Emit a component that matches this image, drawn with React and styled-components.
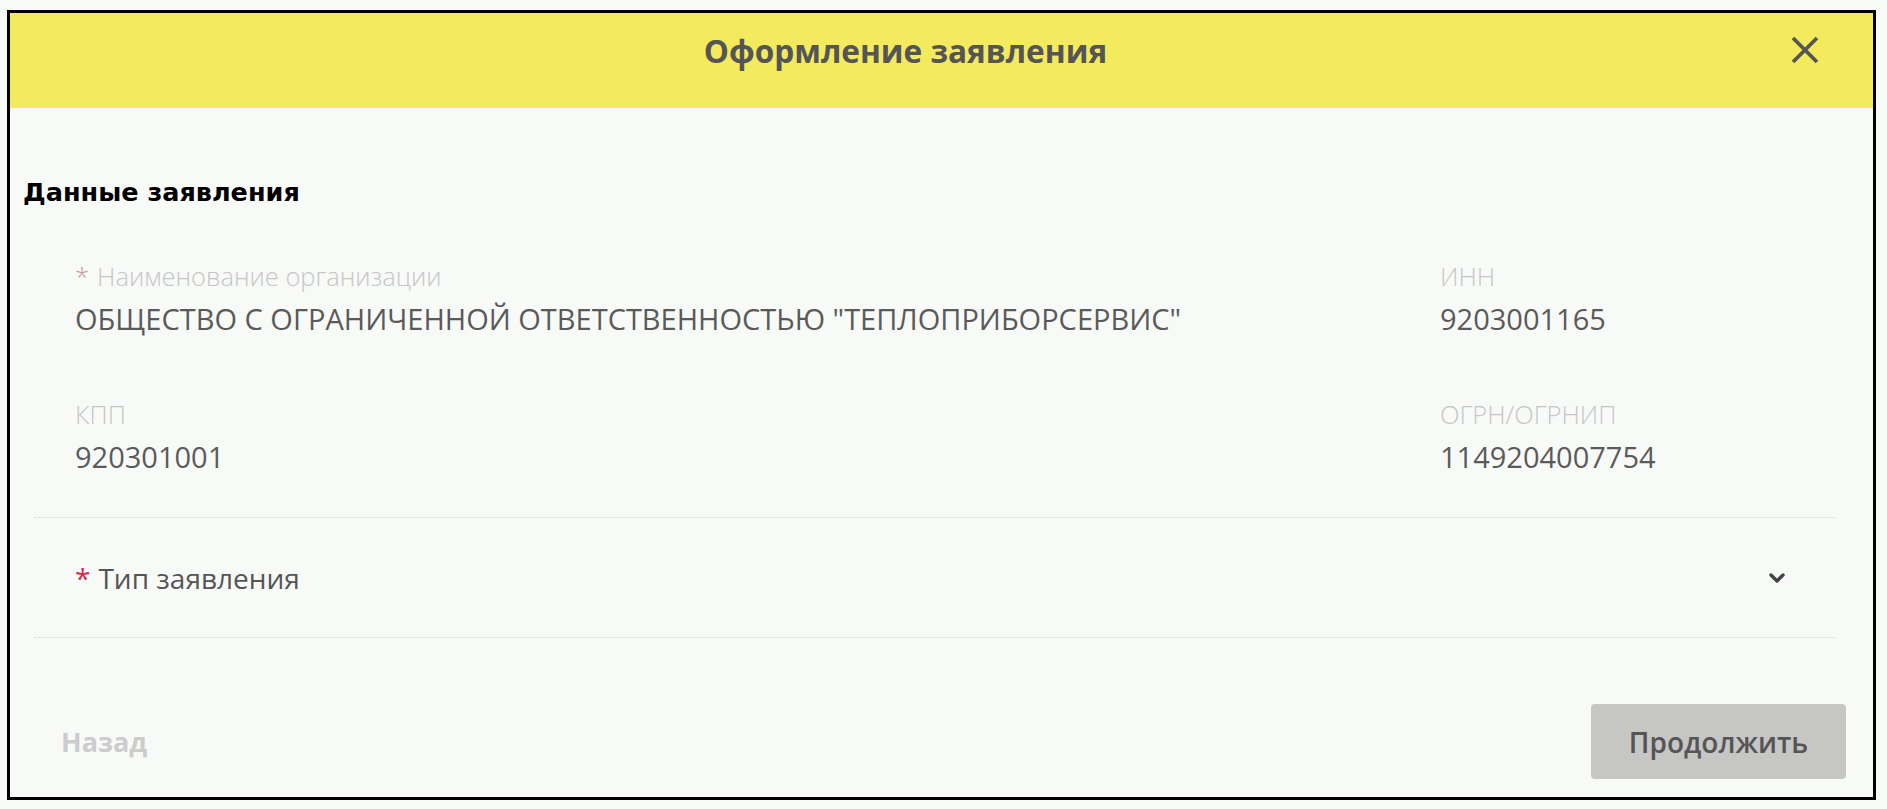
import styled, { createGlobalStyle } from "styled-components";
import { ChevronDown } from "lucide-react";

const GlobalStyle = createGlobalStyle`
  html, body {
    margin: 0;
    padding: 0;
    background: #f8faf8;
  }
  body {
    font-family: "Open Sans", "Noto Sans", sans-serif;
  }
`;

const fields = [
  [
    { label: "Наименование организации", value: 'ОБЩЕСТВО С ОГРАНИЧЕННОЙ ОТВЕТСТВЕННОСТЬЮ "ТЕПЛОПРИБОРСЕРВИС"', required: true },
    { label: "ИНН", value: "9203001165" },
  ],
  [
    { label: "КПП", value: "920301001" },
    { label: "ОГРН/ОГРНИП", value: "1149204007754" },
  ],
];

const App = () => {
  return (
    <>
      <GlobalStyle />
      <Page>
        <Modal>
          <Header>
            <Title>Оформление заявления</Title>
            <CloseButton aria-label="Закрыть">
              <svg width="30" height="30" viewBox="0 0 30 30">
                <path d="M3 3 L27 27 M27 3 L3 27" stroke="#555" strokeWidth="3.8" strokeLinecap="butt" />
              </svg>
            </CloseButton>
          </Header>
          <Body>
            <SectionTitle>Данные заявления</SectionTitle>
            <Fields>
              {fields.map((row, i) => (
                <FieldRow key={i}>
                  {row.map((f) => (
                    <Field key={f.label}>
                      <Label>
                        {f.required && <Star $muted>*</Star>}
                        {f.label}
                      </Label>
                      <Value>{f.value}</Value>
                    </Field>
                  ))}
                </FieldRow>
              ))}
            </Fields>
            <SelectRow>
              <SelectLabel>
                <Star>*</Star>Тип заявления
              </SelectLabel>
              <ChevronDown size={24} strokeWidth={3.4} color="#444" />
            </SelectRow>
            <Footer>
              <BackButton>Назад</BackButton>
              <NextButton>Продолжить</NextButton>
            </Footer>
          </Body>
        </Modal>
      </Page>
    </>
  );
};

export default App;

const Page = styled.div`
  padding: 10px 11px 9px 7px;
  height: 809px;
  box-sizing: border-box;
`;

const Modal = styled.div`
  height: 100%;
  box-sizing: border-box;
  border: 3px solid #000;
  background: #f8faf8;
  display: flex;
  flex-direction: column;
`;

const Header = styled.div`
  position: relative;
  height: 97px;
  box-sizing: border-box;
  padding: 18px 72px 0 0;
  background: #f3ea5e;
  display: flex;
  align-items: flex-start;
  justify-content: center;
`;

const Title = styled.h2`
  margin: 0;
  font-family: "Open Sans", sans-serif;
  font-weight: 700;
  font-size: 31.6px;
  line-height: 40px;
  color: #555;
`;

const CloseButton = styled.button`
  position: absolute;
  right: 53px;
  top: 22px;
  padding: 0;
  border: none;
  background: none;
  display: flex;
`;

const Body = styled.div`
  flex: 1;
  display: flex;
  flex-direction: column;
  padding: 0 27px 0 13px;
`;

const SectionTitle = styled.h3`
  margin: 68px 0 0;
  font-family: "DejaVu Sans", Verdana, sans-serif;
  font-weight: 700;
  font-size: 25.5px;
  line-height: 32px;
  color: #000;
`;

const Fields = styled.div`
  padding: 52px 0 0 52px;
  display: flex;
  flex-direction: column;
  gap: 60px;
`;

const FieldRow = styled.div`
  display: grid;
  grid-template-columns: 1365px 1fr;
`;

const Field = styled.div`
  display: flex;
  flex-direction: column;
  gap: 8px;
`;

const Label = styled.div`
  font-size: 25.5px;
  font-weight: 300;
  color: #c6c6c6;
  line-height: 32px;
`;

const Star = styled.span`
  color: ${(p) => (p.$muted ? "#c49a9a" : "#d42a48")};
  margin-right: 8px;
`;

const Value = styled.div`
  font-size: 29px;
  color: #5a5a5a;
  line-height: 38px;
`;

const SelectRow = styled.div`
  margin: 41px 10px 0 11px;
  height: 121px;
  box-sizing: border-box;
  border-top: 1px dotted #d4d4d4;
  border-bottom: 1px dotted #d4d4d4;
  display: flex;
  align-items: center;
  justify-content: space-between;
  padding: 0 47px 0 41px;
`;

const SelectLabel = styled.div`
  font-size: 28px;
  color: #555;
`;

const Footer = styled.div`
  flex: 1;
  display: flex;
  align-items: center;
  justify-content: space-between;
  padding: 66px 0 18px 38px;
`;

const BackButton = styled.button`
  border: none;
  background: none;
  padding: 0;
  font-family: "Open Sans", sans-serif;
  font-weight: 700;
  font-size: 27px;
  color: #cccccc;
`;

const NextButton = styled.button`
  width: 255px;
  height: 75px;
  border: none;
  border-radius: 4px;
  background: #c6c6c5;
  font-family: "Open Sans", sans-serif;
  font-weight: 600;
  font-size: 28px;
  color: #555;
`;
